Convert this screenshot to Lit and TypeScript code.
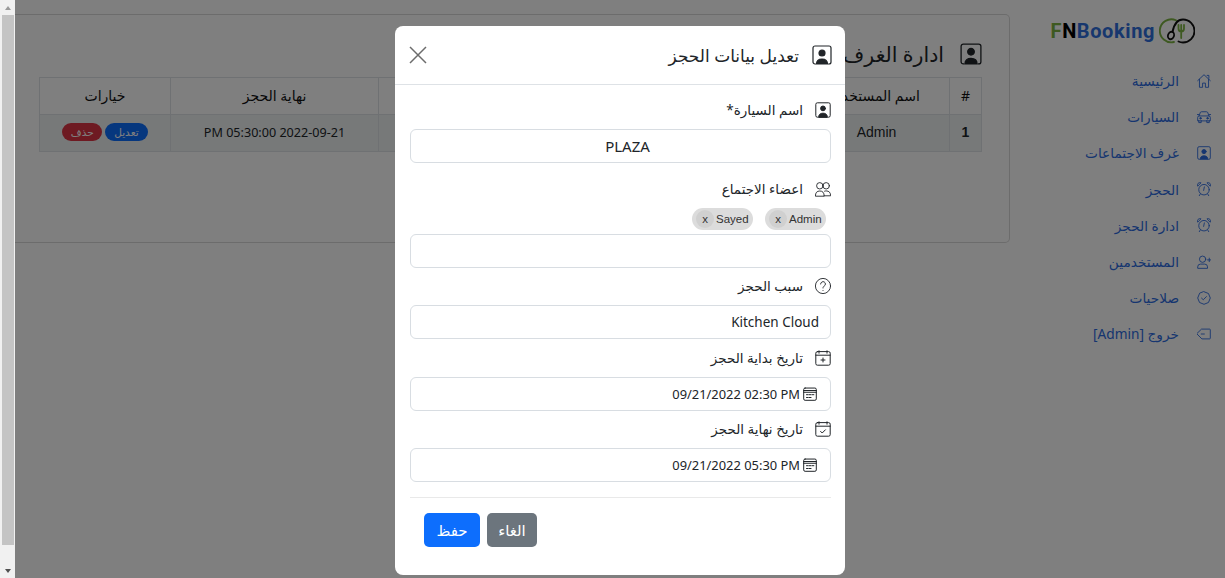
import { LitElement, html, css, svg } from "lit";
import { customElement } from "lit/decorators.js";

const ic = (body: unknown, size = 16, sw = 1) => html`<svg class="ic" width=${size} height=${size} viewBox="2 2 20 20" fill="none" stroke="currentColor" stroke-width=${sw * 20 / size} stroke-linecap="round" stroke-linejoin="round">${body}</svg>`;

const pin = svg`<path d="M5.500 21H5a2 2 0 0 1-2-2V5a2 2 0 0 1 2-2h14a2 2 0 0 1 2 2v14a2 2 0 0 1-2 2h-.5"/><circle cx="12" cy="10" r="3" fill="currentColor"/><path d="M6.500 21c0-3.500 2.300-5 5.500-5s5.500 1.500 5.500 5z" fill="currentColor"/>`;
const home = svg`<path d="M3 11.500L12 3l9 8.500M5.500 9.500V21h4.500v-6h4v6h4.500V9.500M16.500 4h2.500v4"/>`;
const car = svg`<path d="M5 10.500l1.500-4.500a2 2 0 0 1 2-1.500h7a2 2 0 0 1 2 1.500l1.500 4.500M3 17v-4.500a2 2 0 0 1 2-2h14a2 2 0 0 1 2 2V17zM4.500 17v3h3.500v-3M16 17v3h3.500v-3M2.500 8.500h2M19.500 8.500h2"/><circle cx="7" cy="13.800" r="1.100" fill="currentColor"/><circle cx="17" cy="13.800" r="1.100" fill="currentColor"/>`;
const alarm = svg`<circle cx="12" cy="13" r="7.500"/><path d="M12.500 9l-1 5"/><path d="M2.800 7.500a3.500 3.500 0 0 1 4.400-4.500zM21.200 7.500a3.500 3.500 0 0 0-4.400-4.500zM6.800 19l-1.500 2.500M17.200 19l1.500 2.500"/>`;
const userPlus = svg`<circle cx="10" cy="8" r="4.500"/><path d="M3 20.500v-1.500a4 4 0 0 1 4-4h6a4 4 0 0 1 4 4v1.500zM19.500 6.500v5M17 9h5"/>`;
const shield = svg`<path d="M12 3l6.400 2.600L21 12l-2.600 6.400L12 21l-6.400-2.600L3 12l2.600-6.400z"/><path d="M8.500 12.200l2.500 2.300 4.500-4.500"/>`;
const logout = svg`<path d="M9 5h11a1 1 0 0 1 1 1v12a1 1 0 0 1-1 1H9l-7-7zM8 12h4.500"/>`;
const group = svg`<circle cx="8" cy="8" r="4"/><circle cx="16" cy="8" r="4"/><path d="M2.500 20.500c0-4 2-6 5.500-6s5.500 2 5.500 6zM14 14.700c.6-.2 1.300-.3 2-.3 3.500 0 5.500 2 5.500 6.100h-8"/>`;
const question = svg`<circle cx="12" cy="12" r="9.500"/><path d="M9 9.500a3 3 0 1 1 4.500 2.600c-1 .6-1.500 1.200-1.500 2.400M12 17.500v.1"/>`;
const calPlus = svg`<rect x="3" y="4" width="18" height="17" rx="2"/><path d="M3 8.500h18M7 3v3M17 3v3M12 12v5M9.500 14.500h5"/>`;
const calCheck = svg`<rect x="3" y="4" width="18" height="17" rx="2"/><path d="M3 8.500h18M7 3v3M17 3v3M9 15l2 2 4-4"/>`;
const calGrid = svg`<rect x="3" y="3.500" width="18" height="17.500" rx="2"/><path d="M3 7h18M3 9.500h18M7 13h2.500M11 13h2.500M15 13h2.500M7 17h2.500M11 17h2.500"/>`;

const nav: [string, unknown][] = [
  ["الرئيسية", home], ["السيارات", car], ["غرف الاجتماعات", pin], ["الحجز", alarm],
  ["ادارة الحجز", alarm], ["المستخدمين", userPlus], ["صلاحيات", shield], ["خروج [Admin]", logout],
];
const heads = ["#", "اسم المستخدم", "", "", "", "نهاية الحجز", "خيارات"];

@customElement("app-root")
export class AppRoot extends LitElement {
  static styles = css`
    :host { display: block; width: 1225px; height: 578px; overflow: hidden; position: relative; background: #fff; font-family: "Noto Sans", "DejaVu Sans", sans-serif; color: #212529; }
    * { box-sizing: border-box; }
    .ic { flex: none; display: block; }
    .frame { display: flex; height: 578px; }
    .scroll { width: 15px; flex: none; background: #f1f1f1; display: flex; flex-direction: column; align-items: center; position: relative; z-index: 3; }
    .arrow { height: 15px; flex: none; display: flex; align-items: center; justify-content: center; }
    .tri-up { width: 0; height: 0; border: 3.500px solid transparent; border-top: 0; border-bottom: 4px solid #9a9a9a; }
    .tri-down { width: 0; height: 0; border: 3.500px solid transparent; border-bottom: 0; border-top: 4px solid #505050; }
    .thumb { width: 12px; height: 530px; background: #c4c4c4; }
    .grow { flex: 1; }
    .page { flex: 1; display: flex; direction: rtl; min-width: 0; }
    .side { width: 215px; flex: none; padding: 18px 14px 0 0; }
    .logo { direction: ltr; display: flex; align-items: center; justify-content: flex-end; gap: 4px; height: 26px; padding-right: 16px; margin-bottom: 18.500px; font: 700 20px "Roboto", sans-serif; letter-spacing: .6px; }
    .g { color: #7cb342; } .k { color: #000; } .b { color: #2f6fdc; }
    .nav { display: flex; flex-direction: column; }
    .item { height: 36.200px; display: flex; align-items: center; gap: 18px; color: #2c6be0; font-size: 13.700px; }
    .main { flex: 1; min-width: 0; padding-top: 14px; }
    .card { height: 229px; border: 1px solid #d8d8d8; border-left: 0; border-radius: 0 5px 5px 0; padding: 0 27px 0 24px; }
    .h { display: flex; align-items: center; gap: 16px; height: 62px; font-size: 20.500px; color: #212529; padding-top: 16px; }
    table { width: 942px; border-collapse: collapse; table-layout: fixed; font-size: 12.600px; }
    th, td { border: 1px solid #dee2e6; text-align: center; padding: 0 0 2px; white-space: nowrap; overflow: hidden; }
    th { height: 37px; font-weight: 400; font-size: 14px; color: #111; }
    td { height: 37px; background: #eff3f3; }
    .c1 { width: 32px; } .c2 { width: 146px; } .c3 { width: 114px; } .c4 { width: 110px; } .c5 { width: 201px; } .c6 { width: 208px; } .c7 { width: 131px; }
    .arial { font: 14px "Liberation Sans", sans-serif; }
    .pill { display: inline-block; border-radius: 10px; color: #fff; font-size: 10.500px; line-height: 18px; margin: 0 1.500px; vertical-align: middle; }
    .pb { background: #0d6efd; padding: 0 9px; } .pr { background: #dc3545; padding: 0 8.500px; }
    .backdrop { position: absolute; inset: 0 0 0 15px; background: rgba(0,0,0,.5); display: flex; justify-content: center; align-items: flex-start; padding-top: 26px; z-index: 2; }
    .modal { direction: rtl; width: 450px; height: 549px; background: #fff; border-radius: 8px; display: flex; flex-direction: column; }
    .mh { height: 59px; border-bottom: 1px solid #dee2e6; display: flex; align-items: center; justify-content: space-between; padding: 0 13px 0 14px; flex: none; }
    .mt { display: flex; align-items: center; gap: 13px; font-size: 17px; }
    .x { color: #6c6c6c; display: block; }
    .mb { padding: 15px 14px 0 15px; }
    .lab { display: flex; align-items: center; gap: 12px; height: 20px; font-size: 13.500px; }
    .f { height: 34px; border: 1px solid #d8dde2; border-radius: 6px; display: flex; align-items: center; font-size: 13.500px; padding: 0 11px; margin-top: 9px; }
    .plaza { justify-content: center; font-size: 15px; padding-left: 25px; }
    .dt { gap: 3px; font-size: 12.900px; padding-right: 13px; }
    .ltr { direction: ltr; display: inline-block; }
    .chips { direction: ltr; display: flex; justify-content: flex-end; gap: 12px; padding-right: 5px; margin-top: 9px; height: 22px; }
    .chip { display: flex; align-items: center; gap: 2px; width: 61px; background: #dcdcdc; border-radius: 11px; height: 22px; font: 11.500px "Liberation Sans", sans-serif; color: #333; padding: 0 4px; }
    .cx { width: 18px; height: 18px; border-radius: 50%; background: #d0d0d0; display: flex; align-items: center; justify-content: center; flex: none; }
    .hr { border-top: 1px solid #e9e9e9; margin-top: 15px; }
    .btns { direction: ltr; display: flex; gap: 7px; padding: 15px 0 0 14px; }
    .btn { height: 34px; border-radius: 5px; color: #fff; font-size: 15px; display: flex; align-items: center; justify-content: center; }
    .save { background: #0d6efd; width: 56px; } .cancel { background: #6c757d; width: 50px; }
    .t0 { margin-top: 0; } .t16 { margin-top: 16px; } .t9 { margin-top: 9px; } .t8 { margin-top: 8px; }
    .f.near { margin-top: 4px; }
  `;

  private date(label: string, icon: unknown, value: string, top: string) {
    return html`<div class="lab ${top}">${ic(icon, 16)}<span>${label}</span></div>
      <div class="f dt">${ic(calGrid, 14)}<span class="ltr">${value}</span></div>`;
  }

  render() {
    return html`
      <div class="frame">
        <div class="scroll">
          <div class="arrow"><div class="tri-up"></div></div>
          <div class="thumb"></div>
          <div class="grow"></div>
          <div class="arrow"><div class="tri-down"></div></div>
        </div>
        <div class="page">
          <aside class="side">
            <div class="logo">
              <span><span class="g">F</span><span class="k">N</span><span class="b">Booking</span></span>
              <svg width="36" height="26" viewBox="0 0 36 26" fill="none" stroke-width="1.800" stroke-linecap="round">
                <path d="M17 2.300A11.500 11.500 0 1 0 15 24" stroke="#7cb342"/>
                <path d="M13.500 14C15 6 19 1.500 24 1.500a11.500 11.500 0 0 1 0 23c-1.500 0-3-.3-4.500-1" stroke="#111"/>
                <ellipse cx="12" cy="17.500" rx="3" ry="3.800" transform="rotate(20 12 17.500)" stroke="#111"/>
                <path d="M19.500 7v3.500c0 2 1.300 3 2.700 3s2.800-1 2.800-3V7M22.200 7v13" stroke="#7cb342"/>
              </svg>
            </div>
            <nav class="nav">
              ${nav.map(([t, i]) => html`<div class="item">${ic(i, 14, .9)}<span>${t}</span></div>`)}
            </nav>
          </aside>
          <main class="main">
            <section class="card">
              <div class="h">${ic(pin, 22, 1.300)}<span>ادارة الغرف</span></div>
              <table>
                <colgroup><col class="c1"/><col class="c2"/><col class="c3"/><col class="c4"/><col class="c5"/><col class="c6"/><col class="c7"/></colgroup>
                <tr>${heads.map((h) => html`<th>${h}</th>`)}</tr>
                <tr>
                  <td class="arial"><b>1</b></td><td class="arial">Admin</td><td></td><td></td><td></td>
                  <td><span class="ltr">PM 05:30:00 2022-09-21</span></td>
                  <td><span class="pill pb">تعديل</span><span class="pill pr">حذف</span></td>
                </tr>
              </table>
            </section>
          </main>
        </div>
      </div>
      <div class="backdrop">
        <div class="modal">
          <header class="mh">
            <div class="mt">${ic(pin, 20, 1.200)}<span>تعديل بيانات الحجز</span></div>
            <svg class="x" width="18" height="18" viewBox="0 0 18 18" stroke="currentColor" stroke-width="1.500"><path d="M1 1l16 16M17 1L1 17"/></svg>
          </header>
          <div class="mb">
            <div class="lab t0">${ic(pin, 16, 1)}<span>اسم السيارة*</span></div>
            <div class="f plaza">PLAZA</div>
            <div class="lab t16">${ic(group, 16, .9)}<span>اعضاء الاجتماع</span></div>
            <div class="chips">
              <span class="chip"><span class="cx">x</span>Sayed</span>
              <span class="chip"><span class="cx">x</span>Admin</span>
            </div>
            <div class="f near"></div>
            <div class="lab t8">${ic(question, 16, .9)}<span>سبب الحجز</span></div>
            <div class="f">Kitchen Cloud</div>
            ${this.date("تاريخ بداية الحجز", calPlus, "09/21/2022 02:30 PM", "t9")}
            ${this.date("تاريخ نهاية الحجز", calCheck, "09/21/2022 05:30 PM", "t8")}
            <div class="hr"></div>
            <div class="btns">
              <div class="btn save">حفظ</div>
              <div class="btn cancel">الغاء</div>
            </div>
          </div>
        </div>
      </div>
    `;
  }
}
